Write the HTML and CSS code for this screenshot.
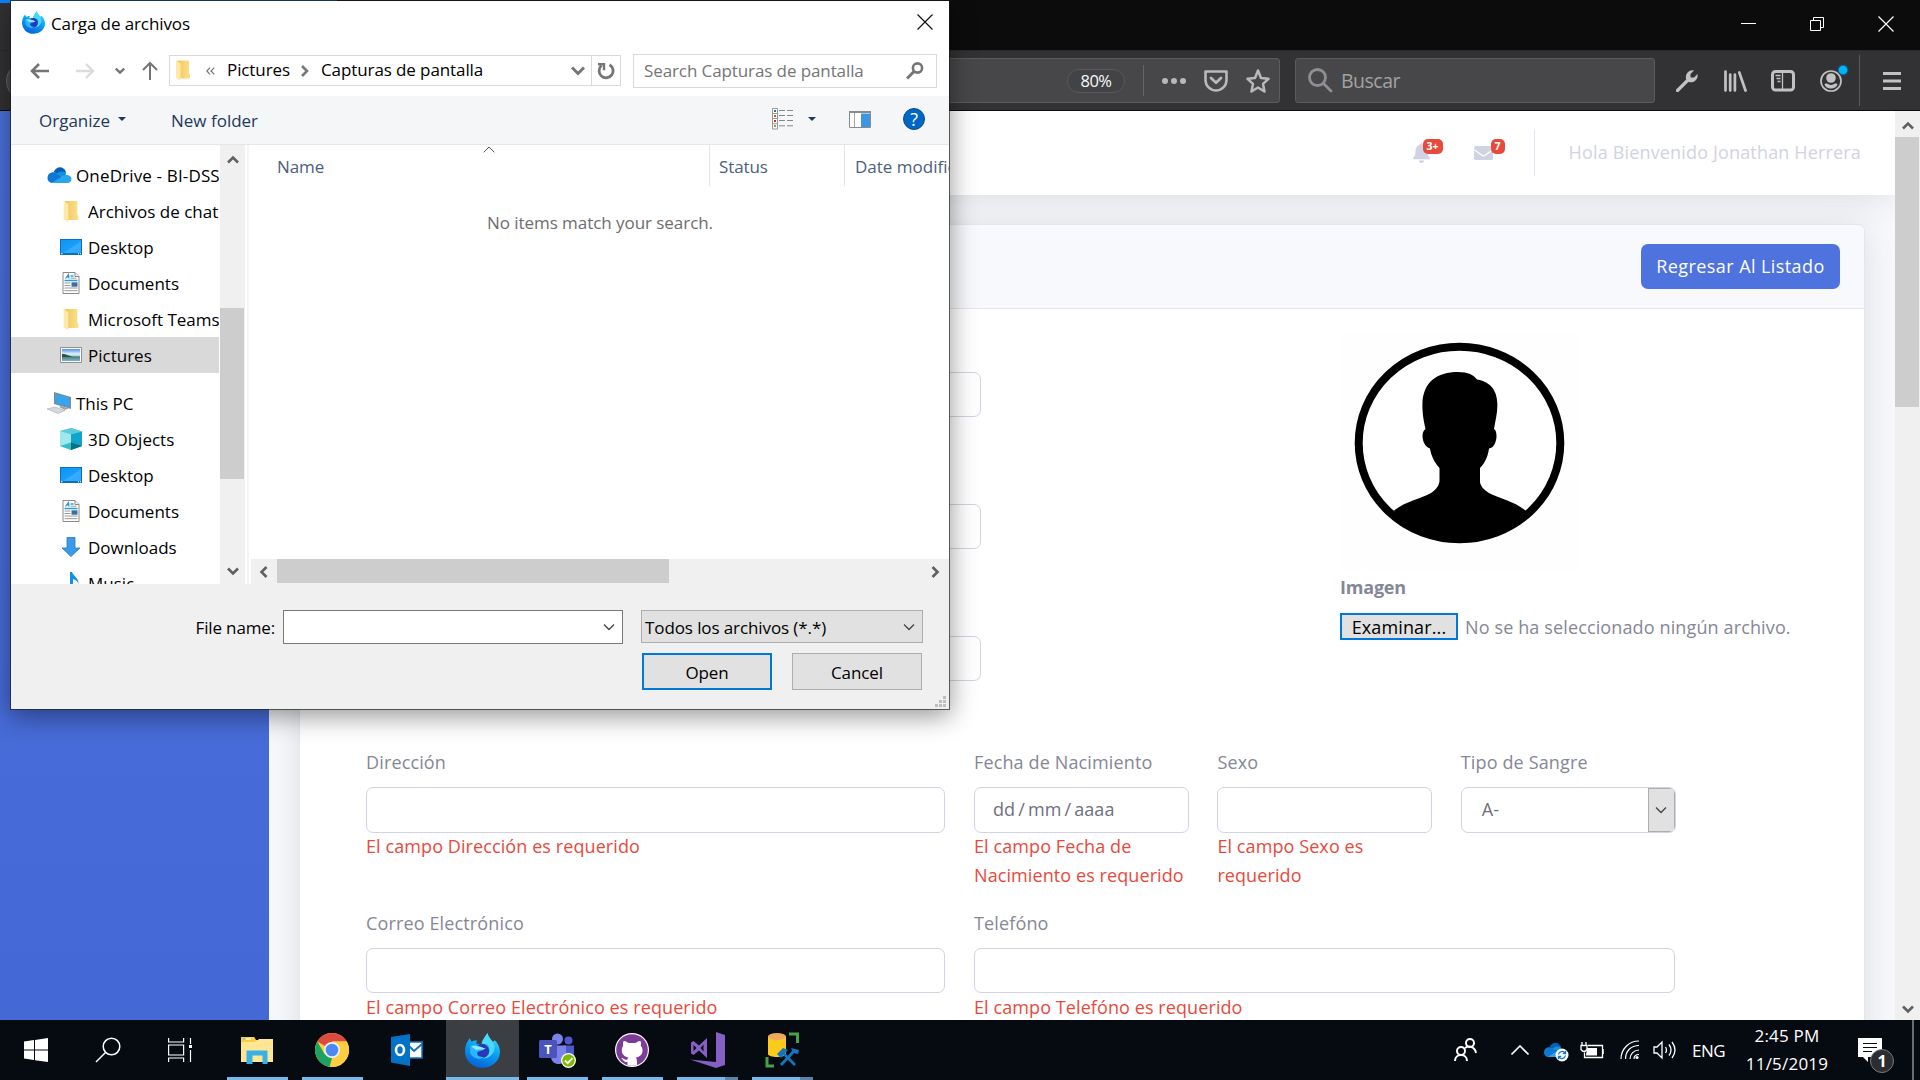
FILE: index.html
```html
<!DOCTYPE html>
<html lang="es">
<head>
<meta charset="utf-8">
<title>Carga de archivos</title>
<link rel="stylesheet" href="styles.css">
</head>
<body>
<svg class="defs" width="0" height="0">
  <defs>
    <linearGradient id="ffBody" x1="0.7" y1="0" x2="0.3" y2="1">
      <stop offset="0" stop-color="#3fe1f6"/><stop offset=".45" stop-color="#0ba3f5"/><stop offset="1" stop-color="#0560d8"/>
    </linearGradient>
    <linearGradient id="folderBack" x1="0" y1="0" x2="1" y2="0"><stop offset="0" stop-color="#f0c75e"/><stop offset="1" stop-color="#fbe08a"/></linearGradient>
    <linearGradient id="desk" x1="0" y1="0" x2="1" y2="1"><stop offset="0" stop-color="#0a96f5"/><stop offset=".55" stop-color="#1a9dfb"/><stop offset=".56" stop-color="#35adff"/><stop offset="1" stop-color="#2ea8fd"/></linearGradient>
    <linearGradient id="photo" x1="0" y1="0" x2="0" y2="1"><stop offset="0" stop-color="#4f8fe8"/><stop offset=".4" stop-color="#dcefff"/><stop offset=".55" stop-color="#b9d8ea"/><stop offset=".65" stop-color="#4d8077"/><stop offset="1" stop-color="#7fb4d8"/></linearGradient>
    <symbol id="firefox" viewBox="0 0 34 34">
      <path d="M3 7.5 4.500 5 6.500 8.500C8 7.500 10 7 12 7.500 10.500 9 10.500 10 11.500 10.500L16 11C17 6 20 3 22 0 22.500 4 25 5.500 27 8.500L29 7C32 10 34 14 34 18.500A17 15.500 0 0 1 0 18C0 14 1 10 3 7.500Z" fill="url(#ffBody)"/>
      <path d="M16 11C17 6 20 3 22 0 22.500 5 27 7 28.500 12 30 18 25 25 17 25 24 22 26 15 21.500 11Z" fill="#48d9fb"/>
      <circle cx="16.500" cy="17.500" r="7" fill="#2a36b8"/>
      <path d="M5 13C8 10 14 13 19 15 17 18 13 17 12 19 11 22 15 24 19 23 15 27 7 25 5 19Z" fill="#29b6fb"/>
      <path d="M6 13C11 11 15 14 20 15 18 16.500 14 15.500 11 16.500Z" fill="#8ce9ff"/>
    </symbol>
    <symbol id="folder" viewBox="0 0 14 20"><path d="M1 0h12v13l1 1v4H3z" fill="url(#folderBack)"/><path d="M0 0 4.500 3v17L0 17.500z" fill="#ffe9a6"/></symbol>
    <symbol id="desktop" viewBox="0 0 22 16"><path d="M0 0h22v16H0z" fill="#0b71ba"/><path d="M1 1h20v13H1z" fill="url(#desk)"/><path d="M1 14.300h1.500v1H1zM18 14.300h1v1h-1zM20 14.300h1v1h-1z" fill="#fff"/></symbol>
    <symbol id="document" viewBox="0 0 17 22"><path d="M.5.5h12l4 4v17H.5z" fill="#fff" stroke="#8a8a8a"/><path d="M12.500.5v4h4" fill="#eee" stroke="#8a8a8a"/><path d="M3 6.500 6 2.500 6.500 6.500M4 5h2.500" fill="none" stroke="#2a8ccc" stroke-width="1.200"/><path d="M8 4h3M2 8.500h13" stroke="#2a9be0" stroke-width="1.300"/><path d="M8 6.200h6M2 11h6M2 13.500h6M2 16h13M2 18.700h13" stroke="#999"/><path d="M9 10.300h6v4.400H9z" fill="#3d6f9e"/></symbol>
    <symbol id="cloud" viewBox="0 0 24 16"><path d="M6 5C9-1 16-1.500 18.500 5L14 9z" fill="#0461b8"/><path d="M0 11C0 6 5 4 9 6l9 6-14 4C1.500 15.500 0 13.500 0 11z" fill="#0f78d4"/><path d="M9 7C12 4 16 4 18.500 5.500L18 11z" fill="#1490df"/><path d="M4 16 15.500 8.800C20 6.500 24 9 24 12c0 2-1.500 4-4 4z" fill="#28a8ea"/></symbol>
    <symbol id="chev" viewBox="0 0 12 12"><path d="M1 3.500 6 8.500 11 3.500" fill="none" stroke="currentColor" stroke-width="2.600"/></symbol>
    <symbol id="thinchev" viewBox="0 0 12 8"><path d="M1 1.500 6 6.500 11 1.500" fill="none" stroke="#444" stroke-width="1.300"/></symbol>
  </defs>
</svg>

<div class="desktop">
  <main class="browser">
    <header class="titlebar">
      <div class="tab"></div>
      <div class="winctl">
        <svg width="16" height="16" viewBox="0 0 16 16"><path d="M1 7.500h15" stroke="#fff"/></svg>
        <svg width="16" height="16" viewBox="0 0 16 16"><path d="M1.500 4.500h10v10h-10zM4.500 4.500v-3h10v10h-3" fill="none" stroke="#fff"/></svg>
        <svg width="16" height="16" viewBox="0 0 16 16"><path d="M.5.5l15 15M15.500.5l-15 15" stroke="#fff" stroke-width="1.200"/></svg>
      </div>
    </header>
    <nav class="navbar">
      <span class="back"></span>
      <div class="urlbar">
        <span class="zoom">80%</span>
        <i class="sep"></i>
        <svg class="dots" width="24" height="6" viewBox="0 0 24 6" fill="#b9b9ba"><circle cx="3" cy="3" r="3"/><circle cx="12" cy="3" r="3"/><circle cx="21" cy="3" r="3"/></svg>
        <svg width="24" height="22" viewBox="0 0 24 22" fill="none" stroke="#b9b9ba" stroke-width="2.600" stroke-linejoin="round" stroke-linecap="round"><path d="M1.500 1.500h21v8.500a10.500 10.500 0 0 1-21 0z"/><path d="M7 8l5 4.800L17 8" stroke-width="2.800"/></svg>
        <svg width="24" height="24" viewBox="0 0 24 24" fill="none" stroke="#b9b9ba" stroke-width="2.500" stroke-linejoin="round"><path d="M12 1.500 15 9l7.500.8-5.500 5 1.500 7.700-6.500-4-6.500 4L7 14.800l-5.500-5L9 9z"/></svg>
      </div>
      <div class="searchbar">
        <svg width="25" height="25" viewBox="0 0 25 25" fill="none" stroke="#8f8f91" stroke-width="2.800" stroke-linecap="round"><circle cx="9.500" cy="9.500" r="8"/><path d="M15.500 15.500 23 23"/></svg>
        <span>Buscar</span>
      </div>
      <svg class="i-wrench" width="22" height="22" viewBox="0 0 22 22"><path d="M1.500 20.500 12 10" stroke="#c2c2c3" stroke-width="3.200" stroke-linecap="round"/><path d="M10 9C9 4 13-.5 18 .5L14.500 4v3.500H18L21.500 4C22.500 9 18 13.500 13 12z" fill="#c2c2c3"/></svg>
      <svg class="i-lib" width="23" height="22" viewBox="0 0 23 22" stroke="#c2c2c3" stroke-width="2.700" stroke-linecap="round"><path d="M1.500 1.500v19M6.200 4.500v16M10.900 4.500v16M15.300 2.500 21.500 20.500"/></svg>
      <svg class="i-side" width="24" height="22" viewBox="0 0 24 22" fill="none" stroke="#c2c2c3"><rect x="1.500" y="1.500" width="21" height="18.500" rx="3" stroke-width="3"/><path d="M11.500 2v18" stroke-width="1.300"/><path d="M4.500 5.500h5M5.500 8.500h4M6.500 11.500h3" stroke-width="1.300"/></svg>
      <svg class="i-acct" width="30" height="30" viewBox="0 0 30 30"><circle cx="11" cy="18" r="10" fill="none" stroke="#c2c2c3" stroke-width="1.700"/><circle cx="11" cy="15" r="4.800" fill="#c2c2c3"/><path d="M4.500 21C8 19.500 8 22 11 22s3-2.500 6.500-1C16.500 27 5.500 27 4.500 21z" fill="#c2c2c3"/><circle cx="23" cy="7" r="5.500" fill="#1c5670"/><circle cx="23" cy="7" r="4.300" fill="#00b3ff"/></svg>
      <i class="navsep"></i>
      <svg class="i-menu" width="18" height="18" viewBox="0 0 18 18" stroke="#c2c2c3" stroke-width="2.800"><path d="M0 1.500h18M0 9h18M0 16.500h18"/></svg>
    </nav>

    <section class="viewport">
      <aside class="side"></aside>
      <div class="page">
        <div class="topbar">
          <div class="alerticon bell">
            <svg width="17" height="20" viewBox="0 0 17 20" fill="#d1d3e2"><path d="M8.500 0c.8 0 1 .6 1 1.300C13 2 14.500 5 14.500 8c0 4 1 5.500 2.500 7v1.200H0V15c1.500-1.500 2.500-3 2.500-7 0-3 1.500-6 5-6.700C7.500.6 7.700 0 8.500 0zM6 17.500h5a2.500 2.500 0 0 1-5 0z"/></svg>
            <b class="badge">3+</b>
          </div>
          <div class="alerticon mail">
            <svg width="19" height="14" viewBox="0 0 19 14"><rect width="19" height="14" rx="1.800" fill="#d1d3e2"/><path d="M0 3.500 7.500 9c1.300 1 2.700 1 4 0L19 3.500" fill="none" stroke="#fff" stroke-width="1.200"/></svg>
            <b class="badge">7</b>
          </div>
          <i class="topsep"></i>
          <span class="hello">Hola Bienvenido Jonathan Herrera</span>
        </div>
        <div class="card">
          <div class="cardhead"><button class="primary">Regresar Al Listado</button></div>
          <div class="cardbody">
            <div class="upper">
              <div class="hiddencol"><div class="input"></div><div class="input"></div><div class="input"></div></div>
              <div class="photo">
                <svg class="avatar" width="239" height="239" viewBox="1340 333 239 239">
                  <path d="M1340 333h239v239h-239z" fill="#fefefe"/>
                  <ellipse cx="1459.500" cy="443" rx="100.800" ry="96.200" fill="#fff" stroke="#000" stroke-width="8"/>
                  <path d="M1394 510.500C1406 501 1421 499 1431 493 1437 489 1439 485 1439.500 481V468C1434 462 1431 455 1430 448.500 1425 447 1422.500 441 1422.500 436 1422.500 432 1424 430 1425.500 429 1423 418 1422.400 412 1422.400 404 1423 382 1437 372 1458 372 1468 372 1474 375 1477 379.500 1492 382 1497.400 392 1497.400 405 1497.400 414 1495 422 1494 429 1496 430 1496.500 433 1496.500 437 1496 442 1494 448 1489 448.500 1488 456 1485 463 1480 468V482C1480.500 486 1484 490 1489 493 1500 499 1514 501 1525.500 510.500 1520 525 1490 542 1460 542S1400 525 1394 510.500Z"/>
                </svg>
                <strong class="imglabel">Imagen</strong>
                <div class="filerow"><button class="browse">Examinar...</button><span>No se ha seleccionado ningún archivo.</span></div>
              </div>
            </div>
            <div class="formrow r4">
              <div class="group"><label>Dirección</label><div class="input"></div><p class="err">El campo Dirección es requerido</p></div>
              <div class="group"><label>Fecha de Nacimiento</label><div class="input date">dd<i>/</i>mm<i>/</i>aaaa</div><p class="err">El campo Fecha de Nacimiento es requerido</p></div>
              <div class="group"><label>Sexo</label><div class="input"></div><p class="err">El campo Sexo es requerido</p></div>
              <div class="group"><label>Tipo de Sangre</label><div class="input select"><span>A-</span><i class="arrow"><svg width="12" height="8"><use href="#thinchev"/></svg></i></div></div>
            </div>
            <div class="formrow r2">
              <div class="group"><label>Correo Electrónico</label><div class="input"></div><p class="err">El campo Correo Electrónico es requerido</p></div>
              <div class="group"><label>Telefóno</label><div class="input"></div><p class="err">El campo Telefóno es requerido</p></div>
            </div>
          </div>
        </div>
      </div>
      <div class="vscroll">
        <svg class="up" width="12" height="12"><use href="#chev"/></svg>
        <i class="thumb"></i>
        <svg class="down" width="12" height="12"><use href="#chev"/></svg>
      </div>
    </section>
  </main>

  <footer class="taskbar">
    <div class="sys"><svg width="24" height="24" viewBox="0 0 24 24" fill="#fff"><path d="M0 3.500 10 2v9.500H0zM11 1.900 24 0v11.500H11zM0 12.500h10V22L0 20.600zM11 12.500h13V24L11 22.200z"/></svg></div>
    <div class="sys"><svg width="26" height="26" viewBox="0 0 26 26" fill="none" stroke="#fff" stroke-width="1.500"><circle cx="16.500" cy="9.500" r="8.300"/><path d="M10.500 15.500 1 25"/></svg></div>
    <div class="sys"><svg width="24" height="24" viewBox="0 0 24 24" fill="none" stroke="#fff" stroke-width="1.200"><path d="M.6 0v4h15V0M.6 24v-4h15v4M.6 7h15v10H.6zM22.500 0v6M22.500 12v12"/><path d="M21 7h3v3h-3z" fill="#fff" stroke="none"/></svg></div>
    <div class="app run first"><svg width="32" height="27" viewBox="0 0 32 27"><path d="M0 0h13l2 3h17v22H0z" fill="#f8d775"/><path d="M0 5h15l3-3h14v23H0z" fill="#ffe694"/><path d="M0 0h13l1.500 3-1.500 2H0z" fill="#fccd3a"/><path d="M2 2h8" stroke="#fff" stroke-width="1.200"/><path d="M2 2h2.500" stroke="#4bc0a0" stroke-width="1.200"/><path d="M5.500 27V13.500h21V27h-5v-8.500h-10V27z" fill="#37b1e6"/></svg></div>
    <div class="app run"><svg width="34" height="34" viewBox="0 0 34 34"><circle cx="17" cy="17" r="17" fill="#ffcd40"/><path d="M17 17 2.300 8.500A17 17 0 0 1 31.700 8.500H17z" fill="#dd4b3e"/><path d="M2.300 8.500 9.700 21.200 17 25l-2.500 8.800A17 17 0 0 1 2.300 8.500z" fill="#1da262"/><path d="M31.700 8.500H17L25 20 16 34a17 17 0 0 0 15.700-25.500z" fill="#ffcd40"/><circle cx="17" cy="17" r="8" fill="#f1f1f1"/><circle cx="17" cy="17" r="6.300" fill="#4a8af4"/></svg></div>
    <div class="app"><svg width="32" height="32" viewBox="0 0 32 32"><path d="M17 8h14v16H17z" fill="#fff" stroke="#1173c4" stroke-width="1.500"/><path d="m18 12 5 5 8-7" fill="none" stroke="#1173c4" stroke-width="2"/><path d="M0 3 19 0v32L0 28.500z" fill="#0272c6"/><ellipse cx="9" cy="16" rx="4" ry="5" fill="none" stroke="#fff" stroke-width="2.600"/></svg></div>
    <div class="app run active"><svg width="35" height="35"><use href="#firefox"/></svg></div>
    <div class="app run"><svg width="37" height="36" viewBox="0 0 37 36"><circle cx="18.500" cy="7" r="5.500" fill="#7b83eb"/><circle cx="29.500" cy="8.500" r="4" fill="#5059c9"/><path d="M24 13.500h11v10a6 6 0 0 1-8 5z" fill="#5059c9"/><path d="M12 13.500h15v11c0 10-15 10-15 0z" fill="#7b83eb"/><rect y="8" width="18" height="18" rx="1.500" fill="#4b53bc"/><text x="9" y="22" text-anchor="middle" class="teamsT">T</text><circle cx="29.500" cy="28.500" r="7.500" fill="#fff"/><circle cx="29.500" cy="28.500" r="6.200" fill="#7fba00"/><path d="m26 28.500 2.700 2.700 4.800-5" fill="none" stroke="#fff" stroke-width="1.800"/></svg></div>
    <div class="app run"><svg width="34" height="34" viewBox="0 0 34 34"><circle cx="17" cy="17" r="17" fill="#fff"/><circle cx="17" cy="17" r="15.800" fill="#7b3d96"/><path d="M8.500 8C11 8 12.500 9.500 13.500 10h7C21.500 9.500 23 8 25.500 8c.8 2 .5 3.500.2 4.500 4 5 1.300 11.500-4.700 12 1 1.500 1 4 1 7.500q-5 1.500-9.500 0v-3c-4 .5-4-2.500-6.500-4 3-.5 3 2.500 6.500 1.500 0-1 .5-1.500 1-2-6-.5-8.700-7-5.200-12-.3-1-.6-2.500.2-4.500z" fill="#fff"/></svg></div>
    <div class="app run multi"><svg width="35" height="36" viewBox="0 0 35 36" fill="#865fc5"><path d="M26 0 35 3v30l-9 3L0 27.500 26 30z"/><path d="M17 6v20L9 18.500 3.500 23 1 21.500V10.500L3.500 9 9 13.500zM13.500 12.500 10.500 16l3 3.500zM3.500 13v6L6.500 16z" fill-rule="evenodd"/></svg></div>
    <div class="app run multi"><svg width="34" height="36" viewBox="0 0 34 36"><path d="M3 4v18c0 4 18 4 18 0V4z" fill="#fcca1c"/><ellipse cx="12" cy="4.500" rx="9" ry="3.500" fill="#f0a860"/><path d="M24 2h8.500v9M2 25v9h7" fill="none" stroke="#46a148" stroke-width="3"/><path d="m16 33 13-14M17 20l13 13" stroke="#1673c0" stroke-width="2.800"/><path d="M12 22l6-6 5 2-7 8zM26 16l2 5 5 1 1-4" fill="#1673c0"/></svg></div>
    <div class="tray">
      <svg class="t-people" width="23" height="24" viewBox="0 0 23 24" fill="none" stroke="#fff" stroke-width="2"><circle cx="16" cy="5" r="4"/><circle cx="7" cy="13" r="4"/><path d="M1 23c0-8 12-8 12 0M11 10c4-3 10-1 11 5"/></svg>
      <svg class="t-up" width="18" height="10" viewBox="0 0 18 10" fill="none" stroke="#fff" stroke-width="1.600"><path d="m.5 9.500 8.500-8.500 8.500 8.500"/></svg>
      <svg class="t-cloud" width="25" height="20" viewBox="0 0 25 20"><use href="#cloud" width="22" height="15.500"/><circle cx="18" cy="13" r="6.500" fill="#fff"/><path d="M14.500 12.500a3.600 3.600 0 0 1 6.500-1.500M21.500 13.500a3.600 3.600 0 0 1-6.500 1.500M21.500 8.800v2.700h-2.700M14.500 17.200v-2.700h2.700" fill="none" stroke="#0f78d4" stroke-width="1.300"/></svg>
      <svg class="t-bat" width="24" height="17" viewBox="0 0 24 17" fill="none" stroke="#fff" stroke-width="1.300"><path d="M8 3.500h14.500v12H4.500v-5M24 7v5M2 0v3M6 0v3M1 3.500h6v4q-3 4-6 0z"/><path d="M7 6h10v7.500H6z" fill="#fff" stroke="none"/></svg>
      <svg class="t-wifi" width="20" height="20" viewBox="0 0 20 20" fill="none" stroke="#fff" stroke-width="1.200"><path d="M1 19C1 9 9 1 19 1M5.500 19C5.500 11 11 5.500 19 5.500M10 19c0-5 4-9 9-9" /><path d="M14 19c0-3 2-4.500 5-4.500"/><circle cx="17" cy="17.500" r="1.600" fill="#fff" stroke="none"/></svg>
      <svg class="t-vol" width="23" height="20" viewBox="0 0 23 20" fill="none" stroke="#fff" stroke-width="1.300"><path d="M1 7h3l5-5v16l-5-5H1zM12.500 7q2 3 0 6M16 4.500q4 5.500 0 11M19 2q6 8 0 16"/></svg>
      <span class="t-lang">ENG</span>
      <div class="t-clock"><span class="t1">2:45 PM</span><span>11/5/2019</span></div>
      <div class="t-note"><svg width="24" height="24" viewBox="0 0 24 24"><path d="M0 0h24v19H10l0 5-5-5H0z" fill="#fff"/><path d="M5 5.500h14M5 9.500h14M5 13.500h9" stroke="#0a0d12" stroke-width="1.200"/></svg><b>1</b></div>
      <i class="t-desk"></i>
    </div>
  </footer>

  <section class="dialog">
    <header class="d-title"><svg width="23" height="23"><use href="#firefox"/></svg><span>Carga de archivos</span>
      <svg class="d-close" width="16" height="16" viewBox="0 0 16 16"><path d="M.5.5l15 15M15.500.5l-15 15" stroke="#111" stroke-width="1.200"/></svg></header>
    <div class="d-nav">
      <svg class="n-back" width="19" height="16" viewBox="0 0 19 16" fill="none" stroke="#757575" stroke-width="2.600"><path d="M19 8H2M9 1 2 8l7 7"/></svg>
      <svg class="n-fwd" width="19" height="16" viewBox="0 0 19 16" fill="none" stroke="#dcdcdc" stroke-width="2.400"><path d="M0 8h17M10 1l7 7-7 7"/></svg>
      <svg class="n-rec" width="10" height="8" viewBox="0 0 10 8" fill="none" stroke="#757575" stroke-width="2.400"><path d="m.8 1.500 4.200 4 4.200-4"/></svg>
      <svg class="n-up" width="16" height="19" viewBox="0 0 16 19" fill="none" stroke="#757575" stroke-width="2"><path d="M8 19V2M1 9l7-7 7 7"/></svg>
      <div class="address">
        <svg width="14" height="21"><use href="#folder"/></svg>
        <svg class="a-more" width="9" height="8" viewBox="0 0 9 8" fill="none" stroke="#777" stroke-width="1.200"><path d="M4 .7.8 4 4 7.300M8.300.7 5 4l3.300 3.300"/></svg>
        <span class="a-pic">Pictures</span>
        <svg class="a-gt" width="8" height="12" viewBox="0 0 8 12" fill="none" stroke="#777" stroke-width="2.600"><path d="m1 1 5 5-5 5"/></svg>
        <span>Capturas de pantalla</span>
        <svg class="a-down" width="14" height="10" viewBox="0 0 14 10" fill="none" stroke="#757575" stroke-width="3"><path d="m1 1.500 6 6 6-6"/></svg>
        <div class="refresh"><svg width="18" height="18" viewBox="0 0 18 18" fill="none" stroke="#757575" stroke-width="2.800"><path d="M4.500 3.500A7 7 0 1 0 12.500 2.700"/><path d="M1 2.200h6v6" stroke-width="2.400"/></svg></div>
      </div>
      <div class="d-search"><span>Search Capturas de pantalla</span><svg width="18" height="18" viewBox="0 0 18 18" fill="none" stroke="#757575"><circle cx="11.500" cy="6" r="4.600" stroke-width="2.600"/><path d="M8 9.500 1 16.500" stroke-width="3"/></svg></div>
    </div>
    <div class="d-tools">
      <span class="org">Organize</span><i class="tri"></i><span class="newf">New folder</span>
      <svg class="v-list" width="22" height="22" viewBox="0 0 22 22"><path d="M.5.5h5v20.500h-5zM.5 5.500h5M.5 10.500h5M.5 15.800h5" fill="#fff" stroke="#999"/><path d="M7 2.500h6M15 2.500h6M7 7.500h6M15 7.500h6M7 12.500h6M15 12.500h6M7 17.800h6M15 17.800h6" stroke="#888"/><path d="M2 2h2v2H2z" fill="#2a6db5"/><path d="M2 7h2v2H2z" fill="#a06a2c"/><path d="M2 12h2v2H2z" fill="#d22"/><path d="M2 17h2v2H2z" fill="#7a4"/></svg>
      <i class="tri t2"></i>
      <svg class="v-pane" width="22" height="17" viewBox="0 0 22 17"><path d="M.5.5h21v16H.5z" fill="#fff" stroke="#8a8a8a"/><path d="M0 1h22" stroke="#8a8a8a" stroke-width="2"/><path d="M5.500 2v14" stroke="#aaa"/><path d="M12 2.500h9V16h-9z" fill="#3c97e0"/></svg>
      <span class="help">?</span>
    </div>
    <div class="d-main">
      <div class="tree">
        <div class="node root od"><svg width="25" height="16"><use href="#cloud"/></svg>OneDrive - BI-DSS</div>
        <div class="node"><svg width="22" height="21"><use href="#folder"/></svg>Archivos de chat</div>
        <div class="node"><svg width="22" height="16"><use href="#desktop"/></svg>Desktop</div>
        <div class="node"><svg width="22" height="22"><use href="#document"/></svg>Documents</div>
        <div class="node"><svg width="22" height="21"><use href="#folder"/></svg>Microsoft Teams</div>
        <div class="node sel"><svg width="22" height="16" viewBox="0 0 22 16"><path d="M.5.5h21v15H.5z" fill="#fff" stroke="#8f8f8f"/><path d="M2 2h18v12H2z" fill="url(#photo)"/><path d="M2 7c5 0 7 2 11 3H2z" fill="#29553a"/></svg>Pictures</div>
        <div class="node root pc"><svg width="25" height="22" viewBox="0 0 25 22"><path d="M7 0 24 5v12L7 12z" fill="#7d8c99"/><path d="M8.500 1.800 22.500 6v9.200L8.500 11z" fill="#35a6ee"/><path d="M14 14l8 2.500-4 1.500-6-3z" fill="#99a5b0"/><path d="M0 17 8 15l10 3.500-7 3z" fill="#d4d9dd" stroke="#a5adb5" stroke-width=".6"/></svg>This PC</div>
        <div class="node"><svg width="22" height="22" viewBox="0 0 22 22"><path d="M0 3 11 0v22L0 18z" fill="#9fe9ee"/><path d="M11 0 22 3.500V18l-11 4z" fill="#12a3c9"/><path d="M0 3 11 0l11 3.500L11 6.500z" fill="#5ccbdc"/><path d="M0 18l11-3.500V22z" fill="#2fc0c8"/><path d="M22 18l-11-3.500V22z" fill="#067082"/></svg>3D Objects</div>
        <div class="node"><svg width="22" height="16"><use href="#desktop"/></svg>Desktop</div>
        <div class="node"><svg width="22" height="22"><use href="#document"/></svg>Documents</div>
        <div class="node"><svg width="22" height="20" viewBox="0 0 22 20"><path d="M7 .5h8V11h5l-9 8.500L2 11h5z" fill="#3a9ae8" stroke="#2a78c0" stroke-width=".8"/></svg>Downloads</div>
        <div class="node"><svg width="22" height="22" viewBox="0 0 22 22"><path d="M10 0h2c1 4 7 6 6.500 12-1-3-3-4-5.500-5v11c0 5-8 5-8 1 0-3 3-4 5-3z" fill="#1390e6"/></svg>Music</div>
      </div>
      <div class="treescroll">
        <svg class="up" width="12" height="12"><use href="#chev"/></svg>
        <i class="thumb"></i>
        <svg class="down" width="12" height="12"><use href="#chev"/></svg>
      </div>
      <div class="files">
        <div class="cols">
          <span class="c-name">Name<svg class="sort" width="12" height="7" viewBox="0 0 12 7"><path d="m.7 6.300 5.300-5.300 5.300 5.300" fill="none" stroke="#555"/></svg></span><span class="c-stat">Status</span><span class="c-date">Date modified</span>
        </div>
        <p class="empty">No items match your search.</p>
        <div class="hscroll">
          <svg class="left" width="12" height="12"><use href="#chev"/></svg><i class="thumb"></i>
          <svg class="right" width="12" height="12"><use href="#chev"/></svg>
        </div>
      </div>
    </div>
    <div class="d-foot">
      <div class="frow"><label>File name:</label><div class="fname"><svg width="12" height="8"><use href="#thinchev"/></svg></div><div class="ftype"><span>Todos los archivos (*.*)</span><svg width="12" height="8"><use href="#thinchev"/></svg></div></div>
      <div class="brow"><button class="open">Open</button><button>Cancel</button></div>
      <svg class="grip" width="11" height="11" viewBox="0 0 11 11" fill="#bfbfbf"><path d="M8 0h3v3H8zM4 4h3v3H4zM8 4h3v3H8zM0 8h3v3H0zM4 8h3v3H4zM8 8h3v3H8z"/></svg>
    </div>
  </section>
</div>
</body>
</html>
```
FILE: styles.css
```css
*{box-sizing:border-box}
body{margin:0;font-family:"Open Sans","Noto Sans",sans-serif;font-size:17px;overflow:hidden}
svg{display:block;flex:none}
i{font-style:normal}
button{font:inherit;letter-spacing:inherit;padding:0;margin:0}
p{margin:0}
.defs{position:absolute}
.desktop{position:relative;width:1920px;height:1080px;display:flex;flex-direction:column;overflow:hidden}
.browser{height:1020px;display:flex;flex-direction:column}

/* browser chrome */
.titlebar{height:50px;background:#0c0c0c;display:flex;justify-content:space-between}
.tab{width:337px;background:#323234;border-top:3px solid #0a84ff}
.winctl{display:flex;gap:53px;padding:16px 26px 0 0}
.navbar{height:61px;background:#323234;border-bottom:1px solid #0c0c0d;border-top:1px solid #2a2a2c;display:flex;align-items:center}
.back{width:38px;height:38px;border-radius:50%;background:#4a4a4c;border:1px solid #66666a;margin-left:6px}
.urlbar{margin-left:156px;width:1080px;height:45px;background:#474749;border:1px solid #5b5b5d;border-radius:3px;display:flex;align-items:center;justify-content:flex-end;padding-right:9px}
.zoom{width:58px;height:24px;border:1px solid #59595c;border-radius:12px;background:#434345;color:#f9f9fa;font-size:16.500px;line-height:22px;text-align:center;letter-spacing:-.5px}
.sep{width:1px;height:31px;background:#66666a;margin:0 18px}
.dots{margin-right:18px}
.urlbar svg:nth-of-type(2){margin-right:18px}
.searchbar{margin-left:15px;width:360px;height:45px;background:#474749;border:1px solid #5b5b5d;border-radius:3px;display:flex;align-items:center;gap:8px;padding-left:12px;color:#a2a2a3;font-size:19.500px;letter-spacing:-.5px}
.i-wrench{margin-left:21px}
.i-lib{margin-left:26px}
.i-side{margin-left:24px}
.i-acct{margin-left:25px;margin-top:-6px}
.navsep{width:1px;height:51px;background:#5b5b5d;margin:0 23px 0 9px}

/* page */
.viewport{flex:1;display:flex;min-height:0;overflow:hidden}
.side{width:269px;background:linear-gradient(#4c71dd,#4468d5)}
.page{flex:1;background:#f8f9fc;display:flex;flex-direction:column;min-width:0;overflow:hidden;font-size:18px;letter-spacing:.09px;color:#858796}
.topbar{flex:none;height:84px;background:#fff;box-shadow:0 3px 34px rgba(58,59,69,.15);display:flex;align-items:center;justify-content:flex-end;padding-right:34px}
.alerticon{position:relative;display:flex}
.bell{margin-right:44px}
.mail{margin-right:41px}
.badge{position:absolute;top:-5px;height:15px;border-radius:5px;background:#e74a3b;color:#fff;font-size:10.500px;line-height:15px;text-align:center}
.bell .badge{left:10px;width:20px;top:-4px}
.mail .badge{left:17px;width:14px;top:-7px}
.topsep{width:1px;height:46px;background:#e3e6f0;margin-right:34px}
.hello{color:#d1d3e2;letter-spacing:.16px;padding-bottom:2px}
.card{margin:29px 30px 0 30px;flex:none;height:1100px;background:#fff;border:1px solid #e3e6f0;border-radius:7px;box-shadow:0 3px 34px rgba(58,59,69,.15);overflow:hidden}
.cardhead{height:84px;background:#f8f9fc;border-bottom:1px solid #e3e6f0;display:flex;justify-content:flex-end;padding:19px 24px}
.primary{width:199px;height:45px;border:0;border-radius:7px;background:#4e73df;color:#fff;letter-spacing:.42px;padding-bottom:2px}
.cardbody{padding:0 188px 0 66px}
.upper{display:flex;justify-content:space-between;height:440px;margin-right:-140px}
.hiddencol{width:615px;padding-top:63px;display:flex;flex-direction:column;gap:87px}
.input{height:45px;border:1px solid #d1d3e2;border-radius:7px;background:#fff}
.photo{width:476px;padding-top:24px}
.imglabel{display:block;margin-top:1px;height:28px;line-height:28px;letter-spacing:-.2px}
.filerow{display:flex;align-items:center;gap:7px;margin-top:12px;white-space:nowrap;letter-spacing:.13px}
.browse{width:118px;height:27px;border:2px solid #0078d7;background:#e1e1e1;color:#000;line-height:22px}
.formrow{display:grid;column-gap:28.600px}
.r4{grid-template-columns:579.400px 214.800px 214.800px 214.800px;height:161px}
.r4 .input{height:46px}
.r2{grid-template-columns:579.400px 701px}
.group{display:flex;flex-direction:column}
.group label{height:38px;line-height:27px;letter-spacing:.14px}
.err{color:#e74a3b;line-height:29px;margin-top:-1px}
.r2 .err{margin-top:0}
.r4 .date{display:flex;align-items:center;padding:0 0 3px 18px;color:#6e707e}
.date i{margin:0 3px}
.select{display:flex;justify-content:space-between;align-items:center;padding-left:20px;color:#6e707e;overflow:hidden}
.select span{padding-bottom:2px}
.arrow{width:27px;height:44px;background:#e1e1e1;border:1px solid #adadad;display:grid;place-items:center}
.vscroll,.treescroll{width:25px;background:#f0f0f0;display:flex;flex-direction:column;color:#606060}
.vscroll .up,.treescroll .up{transform:rotate(180deg);margin:9px 0 0 6.500px}
.thumb{display:block;background:#cdcdcd}
.vscroll .thumb{width:24px;height:270px;margin-top:5px}
.down{margin:auto 0 5px 6.500px}

/* taskbar */
.taskbar{height:60px;background:#060a11;display:flex;align-items:center}
.sys{width:72px;display:grid;place-items:center}
.app{width:61px;margin:0 7px;height:60px;display:grid;place-items:center;border-bottom:3px solid transparent;padding-top:3px}
.first{margin-left:11px}
.app svg{margin-left:-1px}
.run{border-bottom-color:#76b9ed}
.active{width:73px;margin:0 1px;background:#3b3e42}
.multi{border-image:linear-gradient(90deg,#76b9ed 47px,#5684ab 47px) 1}
.multi{border-width:0 0 3px}
.teamsT{font:bold 13px "Open Sans",sans-serif;fill:#fff}
.tray{margin-left:auto;display:flex;align-items:center;color:#fff}
.t-up{margin-left:34px}
.t-cloud{margin-left:15px;margin-top:4px}
.t-bat{margin-left:11px}
.t-wifi{margin-left:16px}
.t-vol{margin-left:13px}
.t-lang{width:34px;margin-left:16px;letter-spacing:-.5px}
.t-clock{width:90px;margin-left:16px;display:flex;flex-direction:column;text-align:center;line-height:28px;letter-spacing:.2px}
.t-note{position:relative;margin:0 30px 0 26px}
.t-note b{position:absolute;left:12px;top:11px;width:24px;height:24px;border-radius:50%;background:#2b2d31;border:1px solid #77797c;font-size:16px;line-height:22px;text-align:center}
.t-desk{width:2px;height:60px;background:#6a6c6f;margin-right:6px}

/* file dialog */
.dialog{position:absolute;left:10px;top:0;width:940px;height:710px;background:#fff;background-clip:padding-box;border:1px solid rgba(28,28,28,.65);box-shadow:0 6px 24px rgba(0,0,0,.42);display:flex;flex-direction:column;color:#000;letter-spacing:-.1px}
.d-title{height:44px;display:flex;align-items:center;padding:0 16px 2px 11px;gap:6px}
.d-title span{padding-top:2px}
.d-close{margin-left:auto}
.d-nav{height:51px;display:flex;align-items:center;padding-left:19px}
.n-fwd{margin-left:27px}
.n-rec{margin-left:20px}
.n-up{margin-left:17px}
.address{margin-left:11px;width:452px;height:31px;border:1px solid #d9d9d9;display:flex;align-items:center;padding-left:6px}
.address span{padding-bottom:2px}
.a-more{margin:0 12px 0 16px}
.a-pic{width:61px}
.a-gt{margin:0 12px 0 13px}
.a-down{margin-left:auto}
.refresh{margin-left:6px;width:29px;height:29px;border-left:1px solid #d9d9d9;display:grid;place-items:center}
.d-search{margin-left:12px;width:304px;height:34px;border:1px solid #d9d9d9;display:flex;align-items:center;justify-content:space-between;padding:0 12px 0 10px;color:#757575}
.d-tools{height:49px;background:#f4f6f8;border-bottom:1px solid #e5e7e9;display:flex;align-items:center;padding:0 24px 2px 28px;color:#1e395b}
.org{width:72px}
.org,.newf{padding-top:2px;letter-spacing:0}
.tri{border:4px solid transparent;border-top-color:#1e395b;border-bottom:0;margin-left:7px}
.newf{margin-left:45px}
.v-list{margin-left:auto}
.t2{margin:0 33px 0 14px}
.help{width:22px;height:22px;margin-left:32px;border-radius:50%;background:#0067c5;border:1px solid #0b4a8a;color:#fff;font-size:18px;line-height:20px;text-align:center}
.d-main{height:439px;display:flex}
.tree{width:208px;padding-top:12px;overflow:hidden;margin-right:1px;letter-spacing:0}
.node{height:36px;display:flex;align-items:center;gap:6px;padding-left:49px;white-space:nowrap}
.root{padding-left:36px;gap:4px}
.od{letter-spacing:.15px}
.pc{margin-top:12px}
.sel{background:#d9d9d9}
.treescroll .thumb{width:24px;height:171px;margin-top:142px}
.treescroll .down{margin-bottom:7px}
.files{flex:1;min-width:0;margin-left:2px;border-left:2px solid #f5f5f5;padding-left:2px;display:flex;flex-direction:column}
.cols{height:41px;display:flex;color:#4c607a;line-height:43px;overflow:hidden;white-space:nowrap;padding-left:26px}
.cols span{flex:none}
.c-name{position:relative;width:433px;border-right:1px solid #e5e5e5}
.sort{position:absolute;left:206px;top:1px}
.c-stat{width:135px;padding-left:9px;border-right:1px solid #e5e5e5}
.c-date{padding-left:10px;letter-spacing:0}
.empty{color:#6d6d6d;text-align:center;margin-top:24px;line-height:26px;letter-spacing:-.05px}
.hscroll{margin-top:auto;height:25px;background:#f0f0f0;display:flex;align-items:center;color:#606060}
.left{transform:rotate(90deg);margin:0 7px}
.hscroll .thumb{width:392px;height:24px;margin-bottom:1px}
.right{transform:rotate(-90deg);margin-left:auto;margin-right:8px}
.d-foot{position:relative;flex:1;background:#f0f0f0;padding-top:26px}
.frow{display:flex;height:34px}
.frow label{width:264px;text-align:right;margin-right:8px;line-height:36px;letter-spacing:-.15px}
.fname{width:340px;height:34px;border:1px solid #7a7a7a;background:#fff;display:flex;align-items:center;justify-content:flex-end;padding-right:7px}
.ftype{margin-left:18px;width:282px;height:33px;border:1px solid #adadad;background:#e1e1e1;display:flex;align-items:center;justify-content:space-between;padding:0 7px 0 3px}
.ftype span{padding-top:2px}
.brow{display:flex;gap:20px;margin:9px 0 0 631px}
.brow button{width:130px;height:37px;border:1px solid #adadad;background:#e1e1e1;color:#000;padding-top:1px}
.brow .open{border:2px solid #0078d7}
.grip{position:absolute;right:3px;bottom:2px}
```
